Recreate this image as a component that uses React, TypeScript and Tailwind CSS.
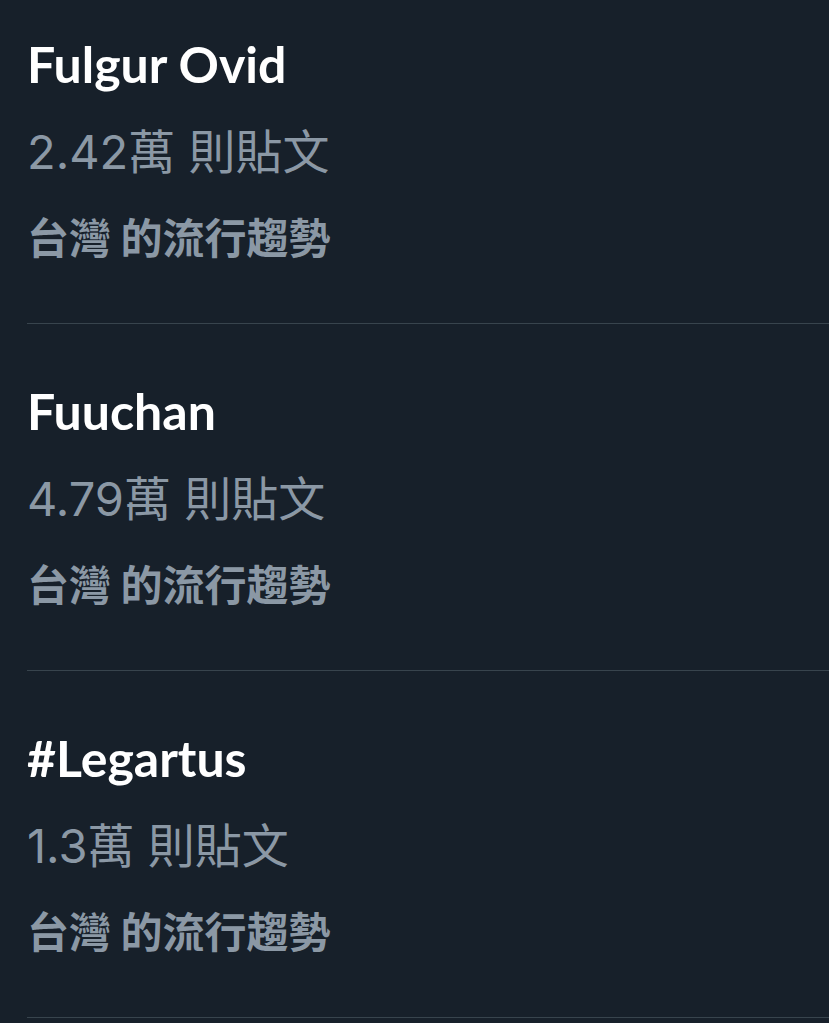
const trends = [
  { name: "Fulgur Ovid", count: "2.42萬 則貼文" },
  { name: "Fuuchan", count: "4.79萬 則貼文" },
  { name: "#Legartus", count: "1.3萬 則貼文" },
];

export default function App() {
  return (
    <div className="min-h-screen w-full overflow-hidden bg-[#17202a]">
      {trends.map((t, i) => (
        <div
          key={t.name}
          className={`ml-[27px] border-b border-[#38444d] pb-[44px] ${i === 0 ? "pt-[21px]" : "pt-[44px]"}`}
        >
          <div className="h-[86px] text-[50px] leading-[86px] font-bold text-white [font-family:Lato,'Noto_Sans',sans-serif]">
            {t.name}
          </div>
          <div className="h-[86px] pt-[3px] text-[47px] leading-[83px] font-normal text-[#8b98a5] [font-family:Inter,'Noto_Sans_CJK_TC',sans-serif]">
            {t.count}
          </div>
          <div className="h-[86px] text-[42px] leading-[86px] font-bold text-[#8b98a5] [font-family:'Noto_Sans_CJK_TC',sans-serif]">
            台灣 的流行趨勢
          </div>
        </div>
      ))}
    </div>
  );
}
